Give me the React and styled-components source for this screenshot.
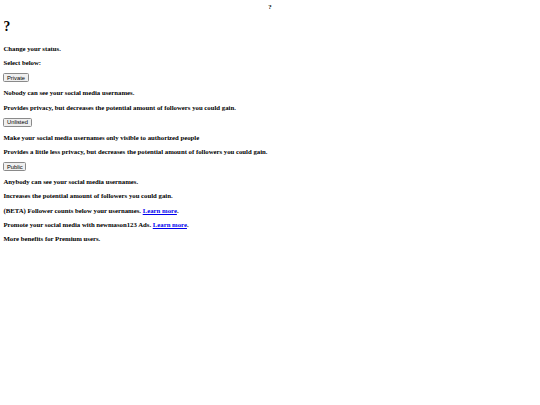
import React from "react";
import styled, { createGlobalStyle } from "styled-components";

const Global = createGlobalStyle`
  html, body { background: #ffffff; }
  body {
    margin: 3.4px;
    font-family: "Liberation Serif", "Times New Roman", serif;
    font-size: 6.75px;
    line-height: 7.6px;
    color: #000000;
  }
`;

const TopMark = styled.div`
  text-align: center;
  font-weight: bold;
  line-height: 7.9px;
`;

const Title = styled.h1`
  font-size: 13.6px;
  line-height: 14.5px;
  font-weight: bold;
  margin: 9.2px 0 9.8px;
`;

const Line = styled.p`
  margin: 6.75px 0;
  font-weight: bold;
`;

const Choice = styled.button`
  display: block;
  box-sizing: border-box;
  height: 9px;
  font-family: "Liberation Sans", Arial, sans-serif;
  font-size: 5.8px;
  line-height: 6px;
  padding: 0 2.6px;
  border: 0.8px solid #8a8a8a;
  border-radius: 1.5px;
  background: #efefef;
  color: #000000;
  cursor: pointer;
`;

const More = styled.a`
  color: #0000ee;
  text-decoration: underline;
`;

const options = [
  {
    label: "Private",
    lines: [
      "Nobody can see your social media usernames.",
      "Provides privacy, but decreases the potential amount of followers you could gain.",
    ],
  },
  {
    label: "Unlisted",
    lines: [
      "Make your social media usernames only visible to authorized people",
      "Provides a little less privacy, but decreases the potential amount of followers you could gain.",
    ],
  },
  {
    label: "Public",
    lines: [
      "Anybody can see your social media usernames.",
      "Increases the potential amount of followers you could gain.",
    ],
  },
];

export default function App() {
  return (
    <>
      <Global />
      <TopMark>?</TopMark>
      <Title>?</Title>
      <Line>Change your status.</Line>
      <Line>Select below:</Line>
      {options.map((o) => (
        <React.Fragment key={o.label}>
          <Choice>{o.label}</Choice>
          {o.lines.map((l) => (
            <Line key={l}>{l}</Line>
          ))}
        </React.Fragment>
      ))}
      <Line>
        (BETA) Follower counts below your usernames. <More href="#">Learn more</More>.
      </Line>
      <Line>
        Promote your social media with newmason123 Ads. <More href="#">Learn more</More>.
      </Line>
      <Line>More benefits for Premium users.</Line>
    </>
  );
}
